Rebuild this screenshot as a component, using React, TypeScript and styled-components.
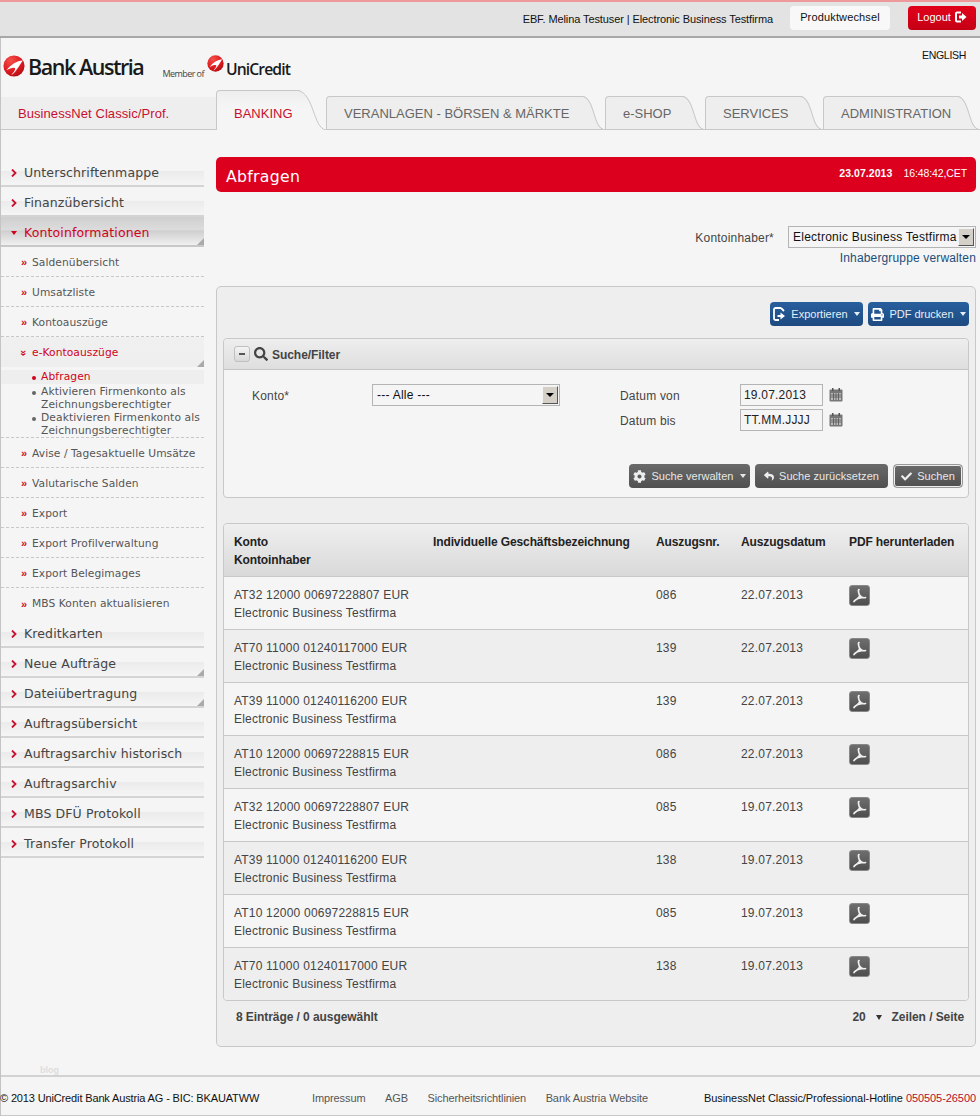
import React from "react";
import styled, { createGlobalStyle } from "styled-components";
import { FaCheck, FaCog, FaPrint, FaReply, FaSearch } from "react-icons/fa";

const Global = createGlobalStyle`
  html, body { margin: 0; padding: 0; background: #f5f5f5; }
  body { width: 980px; height: 1116px; overflow: hidden; font-family: "Liberation Sans", Arial, sans-serif; }
  * { box-sizing: border-box; }
`;

const Page = styled.div`
  width: 980px; height: 1116px; display: flex; flex-direction: column;
  background: #f5f5f5; border-left: 1px solid #c4c4c4; color: #333;
  font-size: 12px; letter-spacing: 0.2px;
`;
const TopBar = styled.header`
  height: 38px; flex: none; display: flex; align-items: center; justify-content: flex-end;
  padding: 0 4px 2px 0; background: #e3e3e3;
  border-top: 2px solid #ee9a9a; border-bottom: 2px solid #a8a8a8; margin-left: -1px;
`;
const UserText = styled.span`color: #111; font-size: 11px; letter-spacing: -0.1px; margin-right: 17px; padding-top: 2px;`;
const ProductButton = styled.button`
  width: 100px; height: 24px; border: 0; border-radius: 4px; background: #f8f8f8; color: #111;
  font: 11px "Liberation Sans", sans-serif; letter-spacing: 0.15px; margin-right: 18px; padding: 0 0 2px;
`;
const LogoutButton = styled.button`
  width: 68px; height: 24px; border: 0; border-radius: 4px; background: linear-gradient(#e2001a, #c40015); color: #fff;
  font: 11px "Liberation Sans", sans-serif; display: flex; align-items: center; justify-content: center; gap: 4px; padding: 0 0 2px;
`;
const LogoRow = styled.div`
  height: 52px; flex: none; position: relative; display: flex; justify-content: space-between; padding: 10px 14px 0 2px;
`;
const Logos = styled.div`display: flex; align-items: flex-start; margin-top: 7px;`;
const BankName = styled.span`
  font: 600 21.5px "Open Sans", sans-serif; letter-spacing: -1.45px; color: #1a1a1a; line-height: 24px; margin: 0 19px 0 3px;
`;
const Member = styled.span`font: 9px "Open Sans", sans-serif; letter-spacing: -0.55px; color: #444; margin-top: 12px; margin-right: 3px;`;
const UniName = styled.span`font: 600 15.7px "Open Sans", sans-serif; letter-spacing: -0.9px; color: #1a1a1a; margin-top: 3px; margin-left: 2px;`;
const English = styled.a`font-size: 10.5px; letter-spacing: -0.3px; color: #111; margin-top: 1px;`;

const TabBar = styled.nav`
  height: 40px; flex: none; display: flex; align-items: flex-end; border-bottom: 1px solid #c8c8c8; position: relative;
`;
const Brand = styled.div`
  width: 215px; flex: none; height: 32px; background: #eee; color: #c8102e; font-size: 13px; letter-spacing: 0.07px;
  padding: 9px 0 0 17px;
`;
const Tab = styled.a<{ $active?: boolean; $w: number }>`
  position: relative; display: flex; align-items: center; flex: none;
  width: ${p => p.$w}px; height: ${p => (p.$active ? 40 : 33)}px; margin-bottom: ${p => (p.$active ? -1 : 0)}px;
  padding: ${p => (p.$active ? "6px 0 0 17px" : "1px 0 0 17px")};
  color: ${p => (p.$active ? "#c8102e" : "#666")}; font-size: 13px; letter-spacing: 0;
  white-space: nowrap;
  background: ${p => (p.$active ? "linear-gradient(#eee, #f5f5f5 16px)" : "#eee")};
  border: 1px solid #c8c8c8; border-bottom: 0; border-right: 0; border-top-left-radius: 4px;
  margin-right: ${p => (p.$active ? 0 : 2)}px;
`;
const TabEdge = styled.svg<{ $w: number }>`position: absolute; top: -1px; right: 0; height: calc(100% + 1px); width: ${p => p.$w}px;`;

const Body = styled.div`flex: 1; display: flex; min-height: 0; padding-top: 27px;`;
const Side = styled.aside`width: 203px; flex: none; display: flex; flex-direction: column;`;
const Main = styled.main`width: 760px; margin-left: 12px; flex: none;`;

const Corner = styled.i`
  position: absolute; right: 0; bottom: 0; width: 0; height: 0;
  border-left: 7px solid transparent; border-bottom: 7px solid #aaa;
`;
const MainItem = styled.a<{ $open?: boolean }>`
  position: relative; display: flex; align-items: center; height: 30px; padding: 3px 0 0 10px; gap: 7px;
  font: 12.5px "DejaVu Sans", sans-serif; letter-spacing: 0.12px; white-space: nowrap;
  color: ${p => (p.$open ? "#d0021b" : "#444")};
  border-bottom: 2px solid ${p => (p.$open ? "#c8c8c8" : "#d4d4d4")};
  background: ${p => p.$open
    ? "linear-gradient(#cfcfcf, #dcdcdc 45%, #cfcfcf 50%, #f0f0f0)"
    : "linear-gradient(#f5f5f5 48%, #ebebeb 50%, #f5f5f5)"};
`;
const Chevron = styled.svg`width: 6px; height: 8px; flex: none;`;
const SubItem = styled.a<{ $open?: boolean; $last?: boolean }>`
  position: relative; display: flex; align-items: center; height: 30px; padding: 1px 0 0 20px; gap: 5px;
  font: 10.7px "DejaVu Sans", sans-serif; letter-spacing: 0.06px; white-space: nowrap;
  color: ${p => (p.$open ? "#d0021b" : "#555")};
  border-bottom: ${p => (p.$last || p.$open ? "0" : "1px dashed #c8c8c8")};
  background: ${p => (p.$open ? "linear-gradient(#f0f0f0, #eee)" : "transparent")};
`;
const Quote = styled.span<{ $down?: boolean }>`
  color: #c8102e; font: bold 11px "Liberation Sans", sans-serif; width: 6px; letter-spacing: -1px;
  transform: ${p => (p.$down ? "rotate(90deg)" : "none")};
`;
const LeafList = styled.div`display: flex; flex-direction: column; padding: 3px 0 0; border-bottom: 1px dashed #c8c8c8;`;
const Leaf = styled.a<{ $on?: boolean }>`
  display: flex; gap: 5px; padding: 0 0 ${p => (p.$on ? 1 : 0)}px 31px; margin-bottom: ${p => (p.$on ? 1 : 0)}px; white-space: nowrap;
  font: 10.7px/13px "DejaVu Sans", sans-serif; letter-spacing: 0.1px;
  color: ${p => (p.$on ? "#d0021b" : "#555")}; background: ${p => (p.$on ? "#eee" : "transparent")};
  &::before { content: ""; flex: none; width: 4px; height: 4px; border-radius: 50%; margin-top: 6px; background: ${p => (p.$on ? "#d0021b" : "#666")}; }
`;

const TitleBar = styled.div`
  height: 35px; display: flex; align-items: center; justify-content: space-between; padding: 0 9px 0 10px;
  background: #dc001e; border-radius: 5px; color: #fff;
`;
const Title = styled.h1`margin: 0; font: 500 15.7px "DejaVu Sans", sans-serif; letter-spacing: 0.3px; padding-top: 3px;`;
const Stamp = styled.div`font-size: 10.5px; letter-spacing: -0.1px; display: flex; gap: 11px; padding-bottom: 3px;`;
const Bold = styled.b`font-weight: 700; letter-spacing: 0.05px;`;

const OwnerBlock = styled.div`height: 94px; padding-top: 34px; display: flex; flex-direction: column; align-items: flex-end;`;
const OwnerRow = styled.div`display: flex; align-items: center; gap: 14px;`;
const FieldLabel = styled.span`color: #444; padding-top: 2px;`;
const Select = styled.div<{ $w: number }>`
  width: ${p => p.$w}px; height: 22px; display: flex; align-items: center; justify-content: space-between;
  background: #fff0; border: 1px solid #b4b4b4; padding: 0 0 0 4px; color: #111; letter-spacing: 0.25px; overflow: hidden; white-space: nowrap;
`;
const SelectArrow = styled.span`
  flex: none; width: 16px; height: 18px; margin-right: 1px; background: #d4d0c8; display: flex; align-items: center; justify-content: center;
  border: 1px solid; border-color: #f4f4f4 #555 #555 #f4f4f4;
  &::after { content: ""; border: 4px solid transparent; border-top: 4px solid #000; border-bottom: 0; }
`;
const ManageLink = styled.a`color: #1a4f7d; margin-top: 3px; letter-spacing: 0.15px;`;

const Panel = styled.section`
  height: 761px; background: #eee; border: 1px solid #c8c8c8; border-radius: 5px; padding: 15px 6px 0;
`;
const ActionRow = styled.div`display: flex; justify-content: flex-end; gap: 5px; height: 36px;`;
const BlueButton = styled.button<{ $w: number }>`
  width: ${p => p.$w}px; height: 24px; border: 0; border-radius: 4px; background: linear-gradient(#275f9e, #1d4a80); color: #e8eef5;
  font: 11px "Liberation Sans", sans-serif; letter-spacing: 0; display: flex; align-items: center; justify-content: center; gap: 5px; padding: 0;
`;
const Caret = styled.span`
  display: inline-block; margin-left: 1px; border: 3.5px solid transparent; border-top: 4.5px solid currentColor; border-bottom: 0;
`;
const SearchBox = styled.div`height: 160px; border: 1px solid #c8c8c8; border-radius: 4px; background: #f5f5f5; display: flex; flex-direction: column;`;
const SearchHead = styled.div`
  height: 31px; flex: none; display: flex; align-items: center; padding: 0 0 0 10px; gap: 4px;
  background: linear-gradient(#eee, #dedede); border-bottom: 1px solid #c4c4c4; border-radius: 4px 4px 0 0;
  font-weight: 700; color: #444; letter-spacing: -0.05px;
`;
const HeadLabel = styled.span`padding-top: 2px;`;
const Toggle = styled.span`
  width: 16px; height: 16px; border-radius: 3px; border: 1px solid #c0c0c0; background: linear-gradient(#f4f4f4, #d8d8d8);
  display: flex; align-items: center; justify-content: center;
  &::after { content: ""; width: 6px; height: 2px; background: #555; }
`;
const SearchGrid = styled.div`
  padding: 14px 0 0 28px; display: grid; grid-template-columns: 120px 188px 60px 120px 83px 24px; grid-auto-rows: 22px; row-gap: 3px; align-items: center;
`;
const GapCell = styled.span``;
const DateInput = styled.div`height: 22px; border: 1px solid #b4b4b4; padding: 3px 0 0 3px; color: #222; letter-spacing: 0.2px;`;
const CalCell = styled.span`display: flex; justify-content: flex-start; padding-left: 6px;`;
const SearchButtons = styled.div`margin-top: auto; display: flex; justify-content: flex-end; gap: 5px; padding: 0 5px 9px 0;`;
const GrayButton = styled.button<{ $w: number; $primary?: boolean }>`
  width: ${p => p.$w}px; height: 24px; border-radius: 4px; color: #e8e8e8;
  border: ${p => (p.$primary ? "1px solid #999" : "0")}; box-shadow: ${p => (p.$primary ? "inset 0 0 0 1px #eee" : "none")};
  background: linear-gradient(#6a6a6a, #505050);
  font: 11px "Liberation Sans", sans-serif; letter-spacing: 0.05px; display: flex; align-items: center; justify-content: center; gap: 5px; padding: 0;
`;

const Table = styled.div`margin-top: 25px; border: 1px solid #c8c8c8; border-radius: 4px; overflow: hidden;`;
const Cols = styled.div`display: grid; grid-template-columns: 199px 223px 85px 108px 1fr; padding-left: 10px; height: 53px;`;
const HeadRow = styled(Cols)`
  background: linear-gradient(#efefef, #d9d9d9); border-bottom: 1px solid #c8c8c8; padding-top: 9px; height: 53px;
  font-weight: 700; color: #222; line-height: 18px; letter-spacing: -0.12px;
`;
const Row = styled(Cols)<{ $alt: boolean }>`
  height: 53px; padding-top: 9px; line-height: 18px; color: #444;
  background: ${p => (p.$alt ? "#eee" : "#f5f5f5")};
  &:not(:last-child) { border-bottom: 1px solid #c8c8c8; }
  &:last-child { height: 52px; }
`;
const Line = styled.div``;
const PdfButton = styled.span`
  width: 21px; height: 21px; border-radius: 3px; background: linear-gradient(#6e6e6e, #4e4e4e); display: flex; align-items: center; justify-content: center;
  border: 1px solid #888; margin-top: -1px;
`;
const TableFoot = styled.div`display: flex; justify-content: space-between; padding: 9px 5px 0 13px; font-weight: 700; color: #444; letter-spacing: -0.07px;`;
const PerPage = styled.div`display: flex; align-items: center; gap: 8px;`;
const SmallCaret = styled.span`border: 3.5px solid transparent; border-top: 5px solid #333; border-bottom: 0; margin: 0 2px;`;

const Footer = styled.footer`
  height: 41px; flex: none; position: relative; border-top: 2px solid #d2d2d2; border-bottom: 1px solid #c8c8c8; margin-top: auto;
  display: flex; align-items: center; font-size: 11px; letter-spacing: 0; color: #111; padding-top: 3px;
`;
const Blog = styled.span`position: absolute; left: 39px; top: -12px; font-size: 9px; font-weight: 700; color: #ddd;`;
const Copy = styled.span`width: 312px; letter-spacing: -0.14px; margin-left: -1px;`;
const FootLinks = styled.div`display: flex; gap: 19.5px; color: #555; letter-spacing: -0.1px;`;
const Hotline = styled.span`margin-left: auto; margin-right: 4px; letter-spacing: -0.07px;`;
const Red = styled.span`color: #b5102c;`;

const Swoosh = ({ size }: { size: number }) => (
  <svg width={size} height={size} viewBox="0 0 24 24">
    <defs>
      <radialGradient id={`g${size}`} cx="35%" cy="25%" r="85%">
        <stop offset="0" stopColor="#f4504a" />
        <stop offset="0.6" stopColor="#dd1a1f" />
        <stop offset="1" stopColor="#a80d12" />
      </radialGradient>
    </defs>
    <circle cx="12" cy="12" r="11.5" fill={`url(#g${size})`} />
    <path d="M21.500 6 C15 6.500 9 10 3.500 17 C8 14 12 13.500 13 14.500 C14 16 11.500 19 9 22 C13 20 17 13 21.500 6Z" fill="#fff" />
  </svg>
);

const ChevronIcon = ({ down }: { down?: boolean }) => (
  <Chevron viewBox="0 0 6 8">
    {down
      ? <path d="M0 2 L6 2 L3 6Z" fill="#d0021b" />
      : <path d="M1 0.5 L4.5 4 L1 7.5" fill="none" stroke="#c8102e" strokeWidth="1.8" />}
  </Chevron>
);

const Edge = ({ w }: { w: number }) => (
  <TabEdge $w={w} viewBox="0 0 34 40" preserveAspectRatio="none">
    <path d="M0 0 C20 4 18 38 34 40 L34 0Z" fill="#f5f5f5" />
    <path d="M0 0.5 C20 4 18 38 34 40" fill="none" stroke="#c8c8c8" strokeWidth="1" vectorEffect="non-scaling-stroke" />
  </TabEdge>
);

const Cal = () => (
  <svg width="14" height="14" viewBox="0 0 14 14">
    <rect x="0.5" y="1.5" width="13" height="12" rx="1" fill="#777" />
    <rect x="2" y="5" width="10" height="7" fill="#bbb" />
    <path d="M2 7h10M2 9h10M4.5 5v7M7 5v7M9.5 5v7" stroke="#555" strokeWidth="0.8" />
    <rect x="3" y="0" width="1.5" height="3" fill="#555" />
    <rect x="9.5" y="0" width="1.5" height="3" fill="#555" />
  </svg>
);

const ExportIcon = () => (
  <svg width="13" height="14" viewBox="0 0 13 14">
    <path d="M8 1H2.500A1.500 1.500 0 0 0 1 2.500v9A1.500 1.500 0 0 0 2.500 13H6" fill="none" stroke="#fff" strokeWidth="1.8" />
    <path d="M8 1 L11 4" stroke="#fff" strokeWidth="1.8" />
    <path d="M4.500 8h3V5.500L12 9l-4.500 3.500V10h-3z" fill="#fff" />
  </svg>
);

const LogoutIcon = () => (
  <svg width="12" height="12" viewBox="0 0 12 12">
    <path d="M6 1.500H2A1 1 0 0 0 1 2.500v7A1 1 0 0 0 2 10.500h4" fill="none" stroke="#fff" strokeWidth="2" />
    <path d="M4 4.500h3V2l4.500 4L7 10V7.500H4z" fill="#fff" />
  </svg>
);

const PdfIcon = () => (
  <svg width="15" height="15" viewBox="0 0 15 15">
    <path d="M7 1.500 C6 1.500 6.500 5 7.500 7 C8.500 9 3 12 2 13.500 M7.500 7 C9 9.500 12 10 13.500 9.500 M2 13.500 C4 10 9 9.500 13.500 9.500" fill="none" stroke="#f0f0f0" strokeWidth="1.7" strokeLinecap="round" />
  </svg>
);

const subTop = ["Saldenübersicht", "Umsatzliste", "Kontoauszüge"];
const subBottom = ["Avise / Tagesaktuelle Umsätze", "Valutarische Salden", "Export", "Export Profilverwaltung", "Export Belegimages", "MBS Konten aktualisieren"];
const mainBottom: [string, boolean][] = [["Kreditkarten", false], ["Neue Aufträge", true], ["Dateiübertragung", true], ["Auftragsübersicht", false], ["Auftragsarchiv historisch", false], ["Auftragsarchiv", false], ["MBS DFÜ Protokoll", false], ["Transfer Protokoll", false]];
const rows = [
  ["AT32 12000 00697228807 EUR", "086", "22.07.2013"],
  ["AT70 11000 01240117000 EUR", "139", "22.07.2013"],
  ["AT39 11000 01240116200 EUR", "139", "22.07.2013"],
  ["AT10 12000 00697228815 EUR", "086", "22.07.2013"],
  ["AT32 12000 00697228807 EUR", "085", "19.07.2013"],
  ["AT39 11000 01240116200 EUR", "138", "19.07.2013"],
  ["AT10 12000 00697228815 EUR", "085", "19.07.2013"],
  ["AT70 11000 01240117000 EUR", "138", "19.07.2013"],
];
const tabs: [string, number][] = [["VERANLAGEN - BÖRSEN & MÄRKTE", 277], ["e-SHOP", 98], ["SERVICES", 116], ["ADMINISTRATION", 155]];

export default function App() {
  return (
    <Page>
      <Global />
      <TopBar>
        <UserText>EBF. Melina Testuser | Electronic Business Testfirma</UserText>
        <ProductButton>Produktwechsel</ProductButton>
        <LogoutButton>Logout <LogoutIcon /></LogoutButton>
      </TopBar>
      <LogoRow>
        <Logos>
          <Swoosh size={22} />
          <BankName>Bank Austria</BankName>
          <Member>Member of</Member>
          <Swoosh size={17} />
          <UniName>UniCredit</UniName>
        </Logos>
        <English>ENGLISH</English>
      </LogoRow>
      <TabBar>
        <Brand>BusinessNet Classic/Prof.</Brand>
        <Tab $active $w={110}>BANKING<Edge w={28} /></Tab>
        {tabs.map(([t, w]) => <Tab key={t} $w={w}>{t}<Edge w={20} /></Tab>)}
      </TabBar>
      <Body>
        <Side>
          <MainItem><ChevronIcon />Unterschriftenmappe</MainItem>
          <MainItem><ChevronIcon />Finanzübersicht</MainItem>
          <MainItem $open><ChevronIcon down />Kontoinformationen<Corner /></MainItem>
          {subTop.map(s => <SubItem key={s}><Quote>»</Quote>{s}</SubItem>)}
          <SubItem $open><Quote $down>»</Quote>e-Kontoauszüge<Corner /></SubItem>
          <LeafList>
            <Leaf $on>Abfragen</Leaf>
            <Leaf>Aktivieren Firmenkonto als<br />Zeichnungsberechtigter</Leaf>
            <Leaf>Deaktivieren Firmenkonto als<br />Zeichnungsberechtigter</Leaf>
          </LeafList>
          {subBottom.map((s, i) => <SubItem key={s} $last={i === subBottom.length - 1}><Quote>»</Quote>{s}</SubItem>)}
          {mainBottom.map(([s, c]) => <MainItem key={s}><ChevronIcon />{s}{c && <Corner />}</MainItem>)}
        </Side>
        <Main>
          <TitleBar>
            <Title>Abfragen</Title>
            <Stamp><Bold>23.07.2013</Bold><span>16:48:42,CET</span></Stamp>
          </TitleBar>
          <OwnerBlock>
            <OwnerRow>
              <FieldLabel>Kontoinhaber*</FieldLabel>
              <Select $w={188}>Electronic Business Testfirma<SelectArrow /></Select>
            </OwnerRow>
            <ManageLink>Inhabergruppe verwalten</ManageLink>
          </OwnerBlock>
          <Panel>
            <ActionRow>
              <BlueButton $w={93}><ExportIcon /> Exportieren <Caret /></BlueButton>
              <BlueButton $w={101}><FaPrint size={13} color="#fff" /> PDF drucken <Caret /></BlueButton>
            </ActionRow>
            <SearchBox>
              <SearchHead><Toggle /><FaSearch size={14} color="#444" /><HeadLabel>Suche/Filter</HeadLabel></SearchHead>
              <SearchGrid>
                <FieldLabel>Konto*</FieldLabel>
                <Select $w={188}>--- Alle ---<SelectArrow /></Select>
                <GapCell />
                <FieldLabel>Datum von</FieldLabel>
                <DateInput>19.07.2013</DateInput>
                <CalCell><Cal /></CalCell>
                <GapCell /><GapCell /><GapCell />
                <FieldLabel>Datum bis</FieldLabel>
                <DateInput>TT.MM.JJJJ</DateInput>
                <CalCell><Cal /></CalCell>
              </SearchGrid>
              <SearchButtons>
                <GrayButton $w={121}><FaCog size={13} color="#eee" /> Suche verwalten <Caret /></GrayButton>
                <GrayButton $w={133}><FaReply size={10} color="#eee" /> Suche zurücksetzen</GrayButton>
                <GrayButton $w={70} $primary><FaCheck size={11} color="#eee" /> Suchen</GrayButton>
              </SearchButtons>
            </SearchBox>
            <Table>
              <HeadRow>
                <div><Line>Konto</Line><Line>Kontoinhaber</Line></div>
                <div>Individuelle Geschäftsbezeichnung</div>
                <div>Auszugsnr.</div>
                <div>Auszugsdatum</div>
                <div>PDF herunterladen</div>
              </HeadRow>
              {rows.map((r, i) => (
                <Row key={i} $alt={i % 2 === 1}>
                  <div><Line>{r[0]}</Line><Line>Electronic Business Testfirma</Line></div>
                  <div />
                  <div>{r[1]}</div>
                  <div>{r[2]}</div>
                  <div><PdfButton><PdfIcon /></PdfButton></div>
                </Row>
              ))}
            </Table>
            <TableFoot>
              <span>8 Einträge / 0 ausgewählt</span>
              <PerPage><span>20</span><SmallCaret /><span>Zeilen / Seite</span></PerPage>
            </TableFoot>
          </Panel>
        </Main>
      </Body>
      <Footer>
        <Blog>blog</Blog>
        <Copy>© 2013 UniCredit Bank Austria AG - BIC: BKAUATWW</Copy>
        <FootLinks><span>Impressum</span><span>AGB</span><span>Sicherheitsrichtlinien</span><span>Bank Austria Website</span></FootLinks>
        <Hotline>BusinessNet Classic/Professional-Hotline <Red>050505-26500</Red></Hotline>
      </Footer>
    </Page>
  );
}
